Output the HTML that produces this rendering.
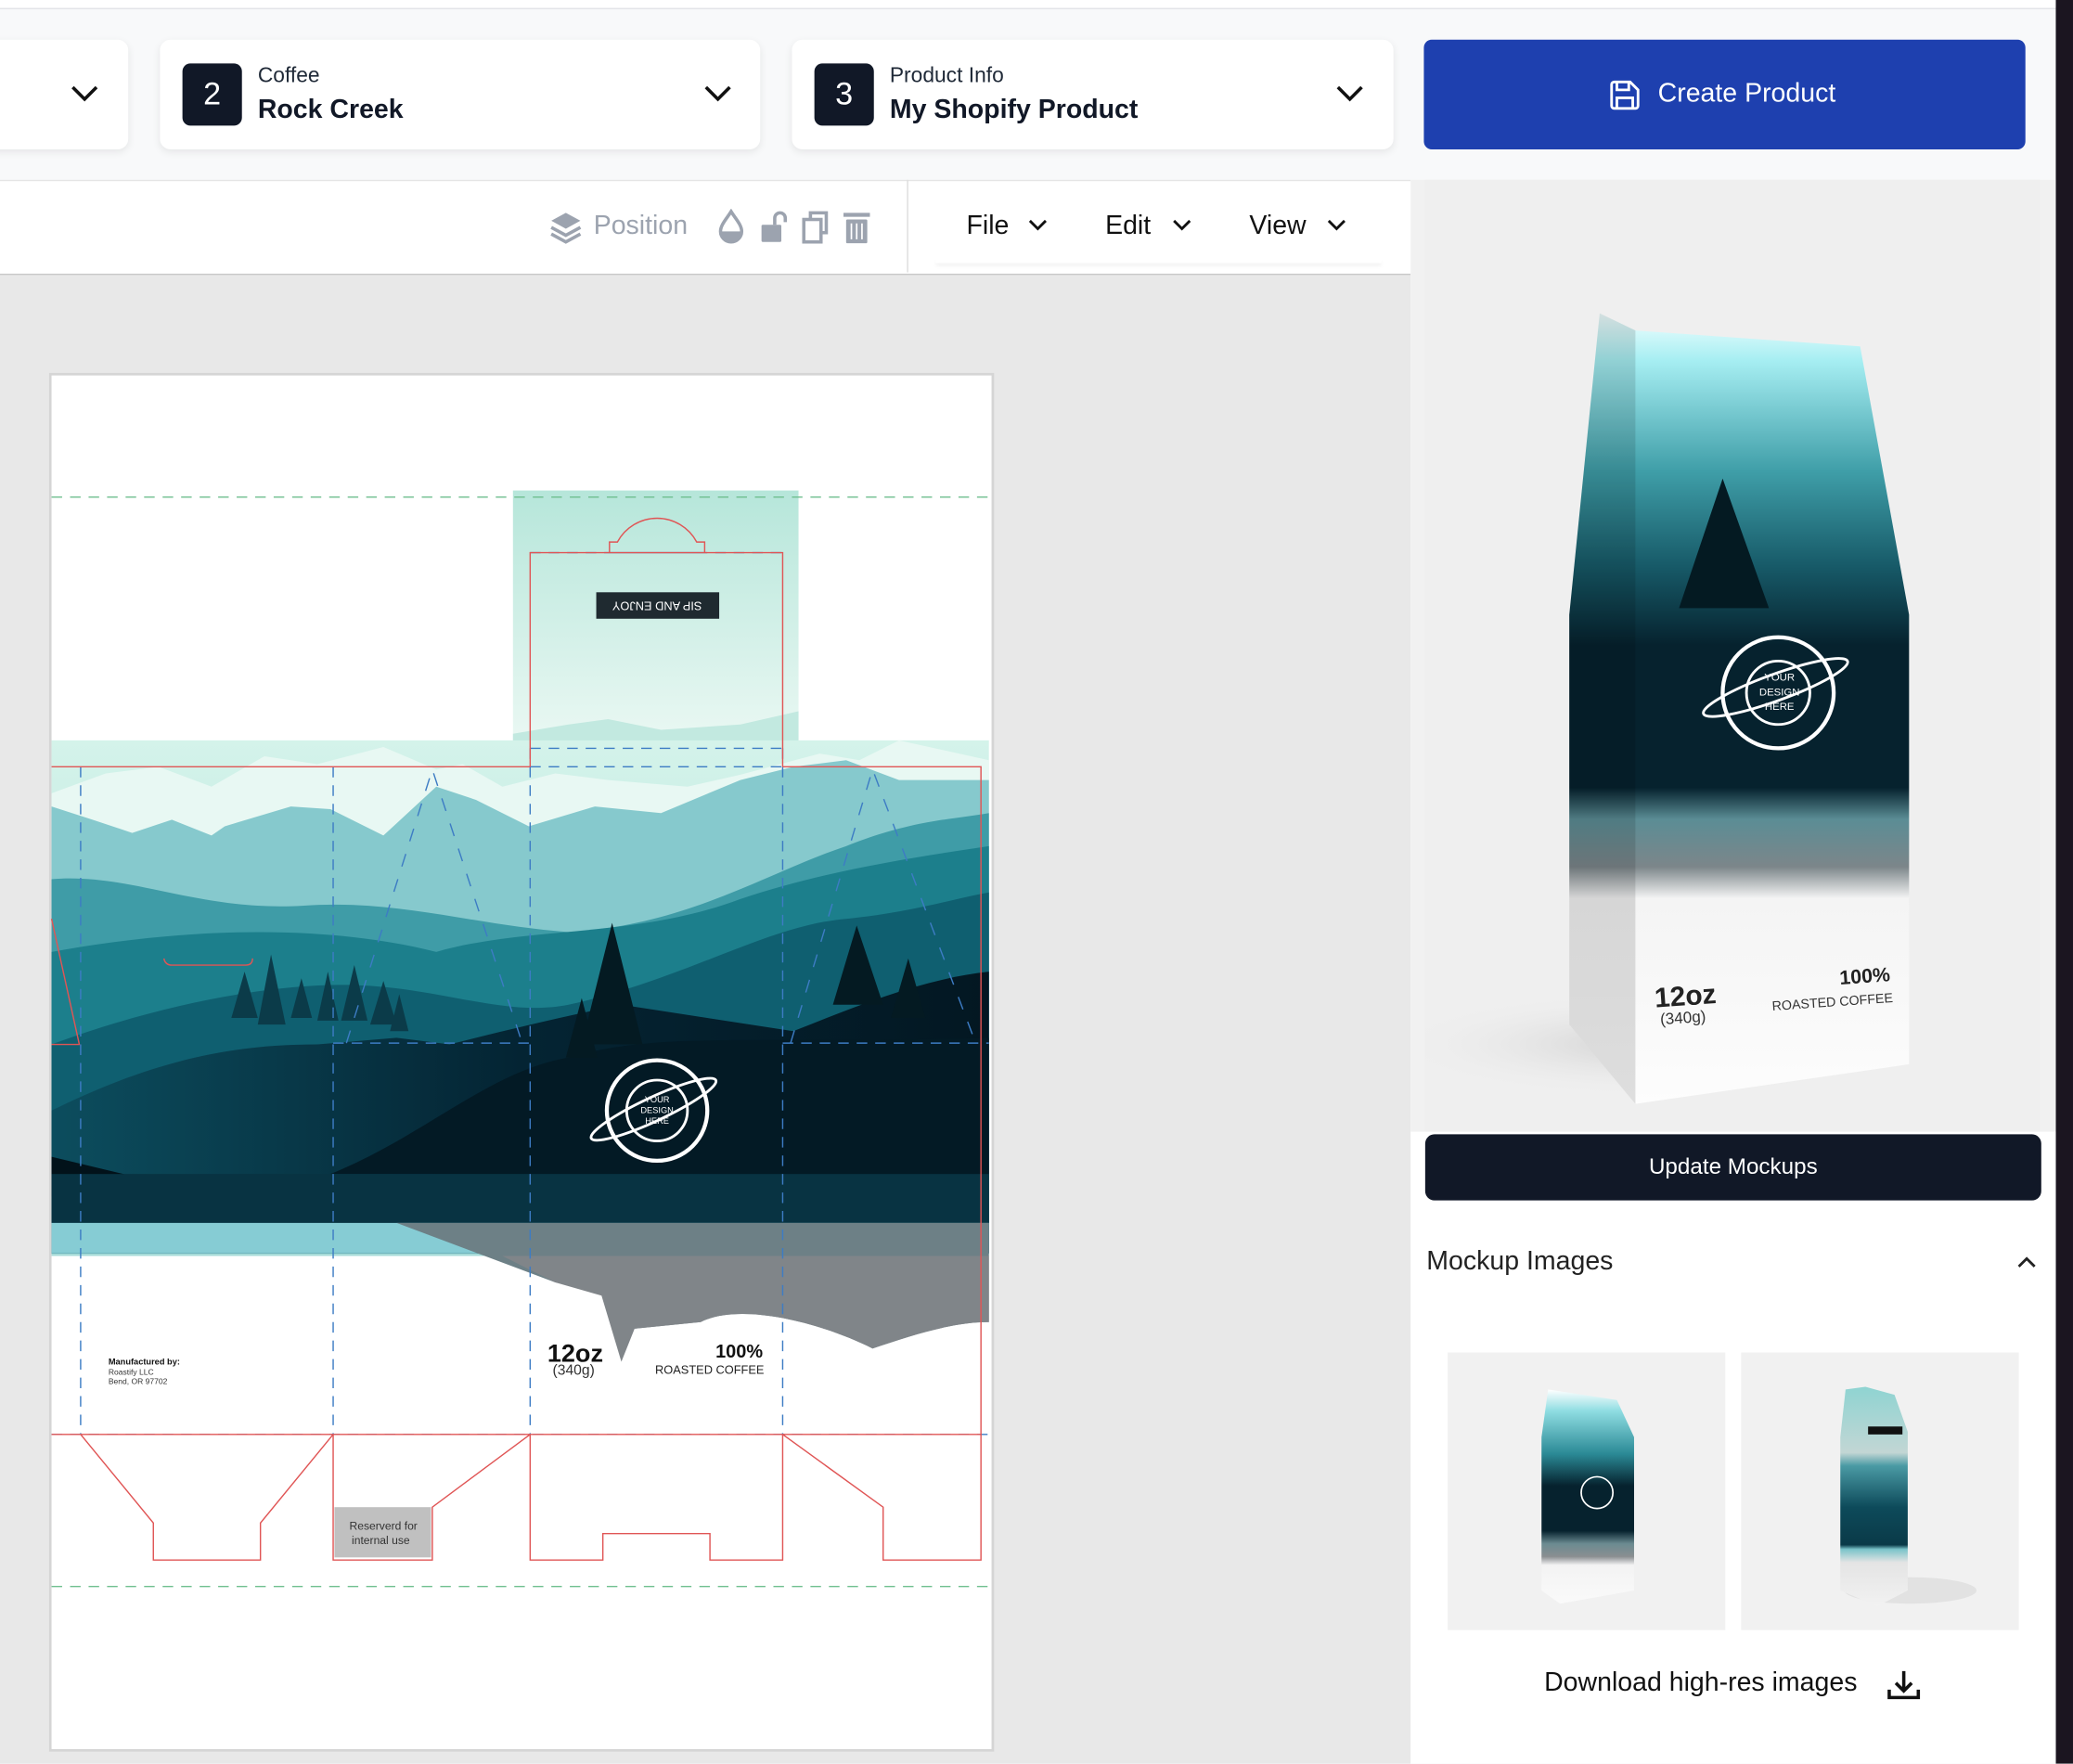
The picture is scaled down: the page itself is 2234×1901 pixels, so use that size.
<!DOCTYPE html>
<html><head><meta charset="utf-8">
<style>
html,body{margin:0;padding:0;width:2234px;height:1900px;overflow:hidden;background:#f8f9fa;}
#w{position:absolute;left:0;top:0;width:1568px;height:1334px;transform:scale(1.42474);transform-origin:0 0;font-family:"Liberation Sans",sans-serif;background:#f8f9fa;}
.abs{position:absolute;}
.card{position:absolute;top:30px;height:83px;background:#fff;border-radius:8px;box-shadow:0 2px 6px rgba(0,0,0,.08);}
.num{position:absolute;left:17px;top:18px;width:45px;height:47px;background:#111827;border-radius:6px;color:#fff;font-size:24px;text-align:center;line-height:47px;}
.sm{position:absolute;left:74px;top:19px;font-size:16px;color:#1f2937;}
.bg{position:absolute;left:74px;top:42px;font-size:20px;font-weight:bold;color:#111827;}
.chev{position:absolute;top:32px;}
</style></head><body><div id="w">
<div class="abs" style="left:0;top:0;width:1555px;height:6px;background:#fff;border-bottom:1px solid #e2e4e7"></div>
<div class="abs" style="left:1555px;top:0;width:13px;height:1334px;background:#1b1520"></div>

<div class="card" style="left:-10px;width:107px;"><svg class="chev" style="left:62px" width="24" height="16" viewBox="0 0 24 16"><path d="M3 4l9 9 9-9" fill="none" stroke="#111" stroke-width="2.5"/></svg></div>
<div class="card" style="left:121px;width:454px;"><div class="num">2</div><div class="sm">Coffee</div><div class="bg">Rock Creek</div><svg class="chev" style="left:410px" width="24" height="16" viewBox="0 0 24 16"><path d="M3 4l9 9 9-9" fill="none" stroke="#111" stroke-width="2.5"/></svg></div>
<div class="card" style="left:599px;width:455px;"><div class="num">3</div><div class="sm">Product Info</div><div class="bg">My Shopify Product</div><svg class="chev" style="left:410px" width="24" height="16" viewBox="0 0 24 16"><path d="M3 4l9 9 9-9" fill="none" stroke="#111" stroke-width="2.5"/></svg></div>
<div class="abs" style="left:1077px;top:30px;width:455px;height:83px;background:#1e40af;border-radius:6px;color:#fff;font-size:20px;">
<svg class="abs" style="left:139px;top:29px" width="26" height="26" viewBox="0 0 26 26"><path d="M3 5a2 2 0 012-2h12l6 6v12a2 2 0 01-2 2H5a2 2 0 01-2-2z M7 3v6h9V3 M7 23v-8h12v8" fill="none" stroke="#fff" stroke-width="2"/></svg>
<div class="abs" style="left:177px;top:30px;">Create Product</div></div>

<div class="abs" style="left:0;top:136px;width:1067px;height:70px;background:#fff;border-bottom:2px solid #c8c8c8;border-top:1px solid #e5e5e5"></div>
<div class="abs" style="left:686px;top:136px;width:1px;height:70px;background:#ddd"></div>
<div class="abs" style="left:708px;top:196px;width:337px;height:3px;box-shadow:0 2px 3px rgba(0,0,0,.06)"></div>
<svg class="abs" style="left:415px;top:159px" width="26" height="26" viewBox="0 0 26 26"><path d="M13 2l11 6-11 6-11-6z" fill="#9ca3af"/><path d="M2 13l11 6 11-6M2 18l11 6 11-6" fill="none" stroke="#9ca3af" stroke-width="2.5"/></svg>
<div class="abs" style="left:449px;top:160px;font-size:20px;color:#9ca3af">Position</div>
<svg class="abs" style="left:542px;top:158px" width="120" height="28" viewBox="0 0 120 28"><path d="M11 2C8 7 3 12 3 17a8 8 0 0016 0c0-5-5-10-8-15z" fill="none" stroke="#9ca3af" stroke-width="2.5"/><path d="M3 17h16a8 8 0 01-16 0z" fill="#9ca3af"/><rect x="34" y="12" width="15" height="13" rx="1" fill="#9ca3af"/><path d="M44 12V7a4 4 0 018 0v3" fill="none" stroke="#9ca3af" stroke-width="2.5"/><rect x="66" y="8" width="13" height="17" fill="none" stroke="#9ca3af" stroke-width="2.5"/><path d="M71 8V3h12v15h-4" fill="none" stroke="#9ca3af" stroke-width="2.5"/><rect x="98" y="8" width="16" height="18" rx="1" fill="#9ca3af"/><rect x="96" y="3" width="20" height="3" fill="#9ca3af"/><path d="M102 11v12M106 11v12M110 11v12" stroke="#fff" stroke-width="1.2"/></svg>
<div class="abs" style="left:731px;top:160px;font-size:20px;color:#111">File</div>
<div class="abs" style="left:836px;top:160px;font-size:20px;color:#111">Edit</div>
<div class="abs" style="left:945px;top:160px;font-size:20px;color:#111">View</div>
<svg class="abs" style="left:776px;top:164px" width="250" height="14" viewBox="0 0 250 14"><path d="M3 3l6 6 6-6M112 3l6 6 6-6M229 3l6 6 6-6" fill="none" stroke="#111" stroke-width="2"/></svg>

<div class="abs" style="left:0;top:208px;width:1067px;height:1126px;background:#e8e8e8"></div>
<div class="abs" style="left:37px;top:282px;width:711px;height:1039px;background:#fff;border:2px solid #d5d5d5"></div>
<svg class="abs" style="left:0;top:0" width="1067" height="1334" viewBox="0 0 1067 1334">
<defs>
<linearGradient id="fl" x1="0" y1="0" x2="0" y2="1"><stop offset="0" stop-color="#b6e6da"/><stop offset="1" stop-color="#eaf8f3"/></linearGradient>
<linearGradient id="sky" x1="0" y1="0" x2="0" y2="1"><stop offset="0" stop-color="#d4f3ea"/><stop offset="1" stop-color="#a6dbd8"/></linearGradient>
<linearGradient id="dk" x1="0" y1="0" x2="1" y2="0"><stop offset="0" stop-color="#0c4d5e"/><stop offset=".5" stop-color="#042433"/><stop offset="1" stop-color="#031722"/></linearGradient>
</defs>
<rect x="388" y="371" width="216" height="190" fill="url(#fl)"/>
<path d="M388 561 L388 555 L430 548 L460 544 L500 552 L560 548 L604 538 V561Z" fill="#c2e9e0"/>
<rect x="39" y="560" width="709" height="390" fill="url(#sky)"/>
<path d="M39 600 L80 585 L120 580 L160 595 L200 572 L240 578 L290 565 L330 582 L350 578 L380 595 L420 585 L460 590 L520 595 L560 586 L620 570 L650 575 L680 560 L748 575 V948 H39Z" fill="#e8f8f3"/>
<path d="M39 610 L70 620 L100 630 L130 620 L160 632 L170 625 L220 610 L250 612 L290 632 L330 595 L360 605 L400 625 L450 610 L500 615 L560 590 L600 580 L640 575 L680 590 L748 590 V948 H39Z" fill="#86c9cd"/>
<path d="M39 665 C100 660 150 690 230 685 C300 680 360 700 430 705 C520 700 580 660 640 640 C690 620 720 620 748 615 V948 H39Z" fill="#3f9ca7"/>
<path d="M39 720 C150 700 250 700 330 720 C400 700 480 710 560 680 C620 660 680 650 748 640 V948 H39Z" fill="#1c7f8c"/>
<path d="M39 790 C120 760 200 745 260 745 C330 745 380 770 430 760 C520 740 580 700 640 695 C690 690 720 680 748 675 V948 H39Z" fill="#0f5f70"/>
<path d="M39 840 C120 800 180 790 240 790 L300 785 L340 790 C380 780 420 770 470 760 L600 780 C650 760 700 740 748 735 V948 H39Z" fill="url(#dk)"/>
<path d="M250 888 C320 860 370 810 430 800 C500 780 560 790 748 785 V888Z" fill="#031a25"/>
<path d="M39 875 L135 898 L39 905Z" fill="#02121a"/>
<g fill="#0b3b49"><path d="M175 770 L185 735 L195 770Z M195 775 L205 722 L216 775Z M220 770 L228 740 L236 770Z M240 772 L248 735 L256 772Z M258 772 L268 730 L278 772Z M280 775 L290 742 L300 775Z M295 780 L302 752 L309 780Z"/></g>
<g fill="#041a22"><path d="M440 790 L463 698 L486 790Z M428 800 L440 755 L452 800Z M630 760 L648 700 L668 760Z M674 770 L687 725 L700 770Z"/></g>
<rect x="39" y="888" width="709" height="37" fill="#083342"/>
<rect x="39" y="925" width="709" height="23" fill="#86ccd4"/>
<path d="M300 925 L748 925 V1000 C720 1000 690 1010 660 1020 C620 1000 560 985 530 1000 L480 1005 L460 975 L420 970 L380 955Z" fill="#6d8086"/>
<path d="M380 950 L748 950 V1000 C720 1000 690 1010 660 1020 C620 1000 560 985 530 1000 L480 1005 L470 1030 L455 980 L420 970Z" fill="#808589"/>
<g fill="none" stroke="#fff"><circle cx="497" cy="840" r="38" stroke-width="3"/><circle cx="497" cy="840" r="23" stroke-width="2"/><ellipse cx="495" cy="838" rx="52" ry="9" transform="rotate(-25 497 840)" stroke-width="2"/></g>
<text x="497" y="834" font-size="6.5" fill="#fff" text-anchor="middle" font-family="Liberation Sans">YOUR</text>
<text x="497" y="842" font-size="6.5" fill="#fff" text-anchor="middle" font-family="Liberation Sans">DESIGN</text>
<text x="497" y="850" font-size="6.5" fill="#fff" text-anchor="middle" font-family="Liberation Sans">HERE</text>
<g stroke="#6fbf8f" stroke-width="1" stroke-dasharray="8 6"><path d="M39 376 H748 M39 1200 H748"/></g>
<g stroke="#3d7cc4" stroke-width="1" stroke-dasharray="8 6" fill="none"><path d="M61 580 V1085 M252 580 V1085 M401 566 V1085 M592 566 V1085 M39 1085 H748 M401 566 H592 M401 580 H592 M252 789 H401 M592 789 H748 M401 418 H592 M465 418 H528"/>
<path d="M262 789 L327 582 L395 789 M598 789 L660 582 L738 789" stroke-dasharray="10 10"/></g>
<g stroke="#e05555" stroke-width="1" fill="none"><path d="M401 580 V418 H592 V580"/>
<path d="M461 418 V410 H467 A34 34 0 0 1 527 410 H533 V418"/>
<path d="M39 580 H401 M592 580 H742 V1085 H39 M39 695 L60 790 H39"/>
<path d="M124 725 Q125 730 130 730 H186 Q191 730 191 725"/>
<path d="M61 1085 L116 1152 V1180 H197 V1152 L252 1085 M252 1085 V1180 H327 V1140 L401 1085 M401 1085 V1180 H456 V1160 H537 V1180 H592 V1085 M592 1085 L668 1140 V1180 H742 V1085"/></g>
<rect x="253" y="1140" width="73" height="38" fill="#c0c0c0"/>
<text x="290" y="1157" font-size="8.5" text-anchor="middle" fill="#333" font-family="Liberation Sans">Reserverd for</text>
<text x="288" y="1168" font-size="8.5" text-anchor="middle" fill="#333" font-family="Liberation Sans">internal use</text>
<rect x="451" y="448" width="93" height="20" fill="#1f2a30"/>
<text x="497" y="461" font-size="9" fill="#fff" text-anchor="middle" font-family="Liberation Sans" transform="rotate(180 497 458)">SIP AND ENJOY</text>
<text x="82" y="1032" font-size="6.5" font-weight="bold" fill="#111" font-family="Liberation Sans">Manufactured by:</text>
<text x="82" y="1040" font-size="6" fill="#333" font-family="Liberation Sans">Roastify LLC</text>
<text x="82" y="1047" font-size="6" fill="#333" font-family="Liberation Sans">Bend, OR 97702</text>
<text x="414" y="1030" font-size="19" font-weight="bold" fill="#111" font-family="Liberation Sans">12oz</text>
<text x="418" y="1040" font-size="11" fill="#333" font-family="Liberation Sans">(340g)</text>
<text x="577" y="1027" font-size="14" font-weight="bold" fill="#111" text-anchor="end" font-family="Liberation Sans">100%</text>
<text x="578" y="1039" font-size="9" fill="#222" text-anchor="end" font-family="Liberation Sans">ROASTED COFFEE</text>
</svg>

<div class="abs" style="left:1067px;top:136px;width:488px;height:1198px;background:#fff"></div>
<div class="abs" style="left:1067px;top:136px;width:488px;height:720px;background:#f1f1f1"></div>
<div class="abs" style="left:1078px;top:136px;width:465px;height:720px;background:#efefef"></div>
<svg class="abs" style="left:1078px;top:136px" width="466" height="720" viewBox="1078 136 466 720">
<defs><linearGradient id="bag" x1="0" y1="0" x2="0" y2="1"><stop offset="0" stop-color="#f2ffff"/><stop offset=".06" stop-color="#a6eef2"/><stop offset=".2" stop-color="#3f9ea8"/><stop offset=".32" stop-color="#175a68"/><stop offset=".42" stop-color="#06222e"/><stop offset=".6" stop-color="#06222e"/><stop offset=".64" stop-color="#5b8d95"/><stop offset=".7" stop-color="#7c868a"/><stop offset=".74" stop-color="#f4f4f4"/><stop offset="1" stop-color="#fdfdfd"/></linearGradient>
<radialGradient id="sh" cx=".5" cy=".5" r=".5"><stop offset="0" stop-color="#d0d0d0"/><stop offset="1" stop-color="#efefef" stop-opacity="0"/></radialGradient></defs>
<ellipse cx="1250" cy="790" rx="200" ry="40" fill="url(#sh)"/>
<path d="M1210 237 L1237 250 L1407 262 L1444 465 L1444 805 L1237 835 L1187 775 L1187 465Z" fill="url(#bag)"/>
<path d="M1210 237 L1237 250 L1237 835 L1187 775 L1187 465Z" fill="#000" opacity=".12"/>
<path d="M1270 460 L1303 362 L1338 460Z" fill="#041a22"/>
<g fill="none" stroke="#fff"><circle cx="1345" cy="524" r="42" stroke-width="3"/><circle cx="1345" cy="524" r="24" stroke-width="2"/><ellipse cx="1343" cy="520" rx="58" ry="10" transform="rotate(-20 1343 520)" stroke-width="2"/></g>
<text x="1346" y="515" font-size="8" fill="#fff" text-anchor="middle" font-family="Liberation Sans">YOUR</text>
<text x="1346" y="526" font-size="8" fill="#fff" text-anchor="middle" font-family="Liberation Sans">DESIGN</text>
<text x="1346" y="537" font-size="8" fill="#fff" text-anchor="middle" font-family="Liberation Sans">HERE</text>
<text x="1252" y="762" font-size="21" font-weight="bold" fill="#222" font-family="Liberation Sans" transform="rotate(-4 1252 762)">12oz</text>
<text x="1256" y="775" font-size="12" fill="#333" font-family="Liberation Sans" transform="rotate(-4 1256 775)">(340g)</text>
<text x="1430" y="742" font-size="15" font-weight="bold" fill="#222" text-anchor="end" font-family="Liberation Sans" transform="rotate(-4 1430 742)">100%</text>
<text x="1432" y="758" font-size="10" fill="#333" text-anchor="end" font-family="Liberation Sans" transform="rotate(-4 1432 758)">ROASTED COFFEE</text>
</svg>
<div class="abs" style="left:1078px;top:858px;width:466px;height:50px;background:#111827;border-radius:7px;color:#fff;font-size:17px;text-align:center;line-height:50px">Update Mockups</div>
<div class="abs" style="left:1079px;top:943px;font-size:20px;color:#222">Mockup Images</div>
<svg class="abs" style="left:1524px;top:949px" width="18" height="12" viewBox="0 0 18 12"><path d="M3 9l6-6 6 6" fill="none" stroke="#222" stroke-width="2"/></svg>
<div class="abs" style="left:1095px;top:1023px;width:210px;height:210px;background:#f1f1f1"></div>
<div class="abs" style="left:1317px;top:1023px;width:210px;height:210px;background:#f1f1f1"></div>
<svg class="abs" style="left:1095px;top:1023px" width="432" height="210" viewBox="0 0 432 210">
<defs><linearGradient id="b2" x1="0" y1="0" x2="0" y2="1"><stop offset="0" stop-color="#fff"/><stop offset=".1" stop-color="#8fdde2"/><stop offset=".3" stop-color="#2b8a96"/><stop offset=".45" stop-color="#06222e"/><stop offset=".66" stop-color="#06222e"/><stop offset=".72" stop-color="#6b8b91"/><stop offset=".78" stop-color="#8a8e91"/><stop offset=".82" stop-color="#f3f3f3"/><stop offset="1" stop-color="#fafafa"/></linearGradient>
<linearGradient id="b3" x1="0" y1="0" x2="0" y2="1"><stop offset="0" stop-color="#8fd4d2"/><stop offset=".3" stop-color="#c2d6d4"/><stop offset=".36" stop-color="#4a9aa4"/><stop offset=".55" stop-color="#0d4a5a"/><stop offset=".72" stop-color="#0a3a48"/><stop offset=".74" stop-color="#79c3c9"/><stop offset=".8" stop-color="#e4e4e4"/><stop offset="1" stop-color="#f2f2f2"/></linearGradient></defs>
<path d="M76 28 L128 36 L141 64 L141 180 L85 190 L71 180 L71 64Z" fill="url(#b2)"/>
<circle cx="113" cy="106" r="12" fill="none" stroke="#fff" stroke-width="1.2"/>
<ellipse cx="180" cy="180" rx="50" ry="10" fill="#e2e2e2" transform="translate(170 0)"/>
<path d="M301 28 L316 26 L338 32 L348 60 L348 180 L325 192 L297 180 L297 64Z" fill="url(#b3)"/>
<rect x="318" y="56" width="26" height="6" fill="#111"/>
</svg>
<div class="abs" style="left:1168px;top:1262px;font-size:20px;color:#111">Download high-res images</div>
<svg class="abs" style="left:1426px;top:1261px" width="28" height="28" viewBox="0 0 28 28"><path d="M14 3v15M8 12l6 6 6-6M3 17v6h22v-6" fill="none" stroke="#111" stroke-width="2.5"/></svg>
</div></body></html>
